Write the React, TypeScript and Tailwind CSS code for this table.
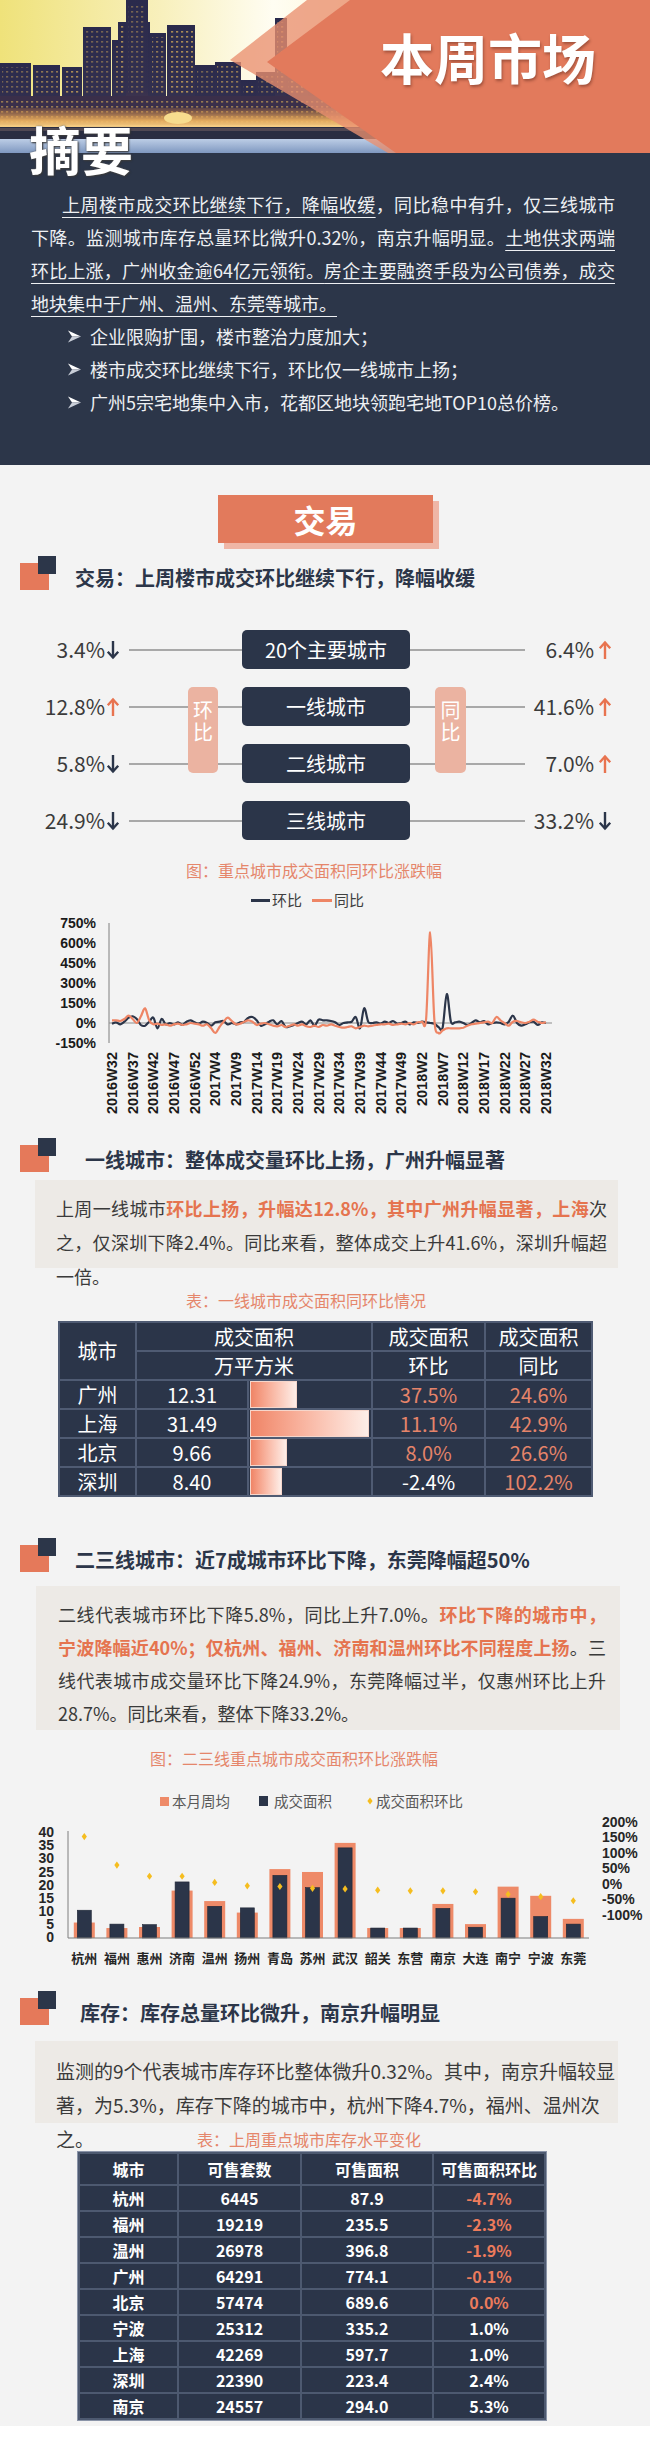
import type { ReactNode } from "react";

const NAVY = "#2b3549";
const ORANGE = "#e8734f";
const ARIAL = "'Liberation Sans', Arial, sans-serif";
const CJK = "'Noto Sans CJK SC', sans-serif";

/** Justified single line; the last line of a paragraph is left as is. */
function Line({ children, last, className = "" }: { children: ReactNode; last?: boolean; className?: string }) {
  return (
    <div className={`${last ? "" : "text-justify [text-align-last:justify]"} ${className}`}>{children}</div>
  );
}

function Hi({ children }: { children: ReactNode }) {
  return <span className="font-bold text-[#e5744f]">{children}</span>;
}

function U({ children }: { children: ReactNode }) {
  return <span className="underline decoration-1 underline-offset-[5px]">{children}</span>;
}

function Heading({ children, pl }: { children: ReactNode; pl: string }) {
  return (
    <div className="relative h-[34px]">
      <div className="absolute left-[20px] top-[7px] w-[29px] h-[27px] bg-[#e5795a]" />
      <div className="absolute left-[38px] top-0 w-[18px] h-[18px] bg-[#2c3649]" />
      <div className={`${pl} pt-[8px] text-[20px] leading-[28px] font-bold text-[#2c3649]`}>{children}</div>
    </div>
  );
}

function Caption({ children, pl }: { children: ReactNode; pl: string }) {
  return <div className={`${pl} text-[16px] leading-[20px] text-[#e5866b]`}>{children}</div>;
}

function Arrow({ up }: { up: boolean }) {
  const c = up ? ORANGE : NAVY;
  return (
    <svg width="14" height="20" viewBox="0 0 14 20" className="shrink-0">
      {up ? (
        <>
          <path d="M7 19V2.5" stroke={c} strokeWidth="2.4" />
          <path d="M1.8 8.2 7 2.5l5.2 5.7" fill="none" stroke={c} strokeWidth="2.4" />
        </>
      ) : (
        <>
          <path d="M7 1v16.5" stroke={c} strokeWidth="2.4" />
          <path d="M1.8 11.8 7 17.5l5.2-5.7" fill="none" stroke={c} strokeWidth="2.4" />
        </>
      )}
    </svg>
  );
}

function Bullet() {
  return (
    <svg width="13" height="13" viewBox="0 0 13 13" className="shrink-0">
      <polygon points="0,0.5 13,6.5 4,6.5" fill="#ffffff" />
      <polygon points="0,12.5 13,6.5 4,6.5" fill="#c9ced8" />
    </svg>
  );
}

function CityArt() {
  const towers: [number, number, number][] = [
    [0, 63, 31], [33, 65, 27], [62, 67, 20], [83, 27, 28], [112, 40, 8], [118, 22, 32],
    [126, 0, 22], [150, 33, 16], [167, 25, 28], [195, 65, 20], [215, 62, 26], [241, 80, 15],
    [256, 72, 28], [275, 18, 12], [286, 62, 22], [308, 88, 40], [350, 70, 30],
  ];
  return (
    <svg width="650" height="153" viewBox="0 0 650 153" className="block">
      <defs>
        <linearGradient id="sky" x1="0" y1="0" x2="1" y2="0">
          <stop offset="0" stopColor="#efe27a" />
          <stop offset="0.25" stopColor="#f8f0bd" />
          <stop offset="0.42" stopColor="#fffdf2" />
          <stop offset="0.7" stopColor="#fbefc0" />
          <stop offset="1" stopColor="#f3d891" />
        </linearGradient>
        <linearGradient id="bld" x1="0" y1="0" x2="0" y2="1">
          <stop offset="0" stopColor="#2a2a4c" />
          <stop offset="0.7" stopColor="#33304f" />
          <stop offset="1" stopColor="#5a3c4a" />
        </linearGradient>
        <linearGradient id="glow" x1="0" y1="0" x2="0" y2="1">
          <stop offset="0" stopColor="#d98840" stopOpacity="0.2" />
          <stop offset="0.6" stopColor="#f0b35e" stopOpacity="0.9" />
          <stop offset="1" stopColor="#f6d28c" />
        </linearGradient>
        <linearGradient id="water" x1="0" y1="0" x2="0" y2="1">
          <stop offset="0" stopColor="#bccde6" />
          <stop offset="1" stopColor="#7f98c0" />
        </linearGradient>
        <pattern id="win" width="5" height="5" patternUnits="userSpaceOnUse">
          <rect x="1" y="1" width="2.2" height="1.6" fill="#f0c15a" opacity="0.85" />
        </pattern>
      </defs>
      <rect width="650" height="153" fill="url(#sky)" />
      {towers.map(([x, y, w], i) => (
        <g key={i}>
          <rect x={x} y={y} width={w} height={125 - y} fill="url(#bld)" />
          <rect x={x + 2} y={y + 4} width={w - 4} height={118 - y} fill="url(#win)" opacity={0.45 + (i % 3) * 0.15} />
        </g>
      ))}
      <rect x="0" y="96" width="420" height="29" fill="#3a2f4a" />
      <rect x="0" y="98" width="420" height="25" fill="url(#win)" opacity="0.6" />
      <rect x="0" y="108" width="420" height="20" fill="url(#glow)" />
      <ellipse cx="178" cy="118" rx="14" ry="6" fill="#f7dc8e" />
      <rect x="0" y="127" width="650" height="12" fill="#2a2d42" />
      <rect x="0" y="128" width="650" height="3" fill="#6a5a60" opacity="0.6" />
      <rect x="0" y="139" width="650" height="14" fill="url(#water)" />
      <polygon points="307,0 650,0 650,153 388,153 230,60" fill="#e9906f" opacity="0.78" />
      <polygon points="350,0 650,0 650,153 396,153 267,62" fill="#e27a5c" />
    </svg>
  );
}

// Weekly series, 2016W32 .. 2018W32
const HUAN = [
  -5, 5, -10, 10, 40, 50, 30, -15, -20, 10, 40, -40, 30, -10, 0, -10, 5, -15, 10, 20, 5, -5, 10, 0, -20, 5,
  10, 15, -10, 0, -10, 5, 10, 40, 45, 20, -20, -10, 10, 20, -10, 15, -30, -25, -15, 0, 10, -10, 20, -20, 25,
  20, 20, 15, 5, -15, 0, 5, 10, 45, -40, 110, 10, 0, 5, -5, 10, 0, 15, -5, 0, 10, -10, 5, 0, 10, 5, 0, -5,
  -30, -35, 217, 10, 5, 10, 0, -15, 0, 20, 5, 15, -10, 0, 5, 0, -10, 10, 55, 0, -20, -10, 5, 10, -15, 5, 0,
];
const TONG = [
  20, 20, 15, 30, 55, 30, 0, 50, 110, 20, -10, -5, -15, -10, -20, -10, -5, -15, -10, 0, -5, -10, -20, -10,
  -40, -75, -30, 10, 40, 15, -10, -5, 10, 20, 10, -15, -5, 0, -10, -20, -25, -15, -30, -20, -10, -20, -10,
  -25, -30, -20, -30, -15, -20, -10, -20, -30, -35, -30, -25, -40, -30, -20, -25, -20, -15, -10, -10, -5,
  -15, -10, -5, -10, 0, -10, 5, 10, 30, 680, 20, -75, -55, -40, -40, -40, -40, -35, -20, -10, -5, 0, 5, 10,
  0, 45, 20, 0, -20, 10, 15, 5, 0, 10, 25, 10, 0, 5,
];
const WEEKS = [
  "2016W32", "2016W37", "2016W42", "2016W47", "2016W52", "2017W4", "2017W9", "2017W14", "2017W19", "2017W24",
  "2017W29", "2017W34", "2017W39", "2017W44", "2017W49", "2018W2", "2018W7", "2018W12", "2018W17", "2018W22",
  "2018W27", "2018W32",
];

function smooth(pts: [number, number][]) {
  let d = `M${pts[0][0].toFixed(1)},${pts[0][1].toFixed(1)}`;
  for (let i = 0; i < pts.length - 1; i++) {
    const p0 = pts[i - 1] ?? pts[i];
    const p1 = pts[i];
    const p2 = pts[i + 1];
    const p3 = pts[i + 2] ?? p2;
    const c1x = p1[0] + (p2[0] - p0[0]) / 6;
    const c1y = p1[1] + (p2[1] - p0[1]) / 6;
    const c2x = p2[0] - (p3[0] - p1[0]) / 6;
    const c2y = p2[1] - (p3[1] - p1[1]) / 6;
    d += ` C${c1x.toFixed(1)},${c1y.toFixed(1)} ${c2x.toFixed(1)},${c2y.toFixed(1)} ${p2[0].toFixed(1)},${p2[1].toFixed(1)}`;
  }
  return d;
}

function LineChart() {
  const px = (i: number) => 112 + i * 4.133;
  const py = (v: number) => 111 - v * 0.1333;
  const toPts = (arr: number[]) => arr.map((v, i) => [px(i), py(v)] as [number, number]);
  return (
    <svg width="650" height="208" viewBox="0 0 650 208" className="block">
      {[750, 600, 450, 300, 150, 0, -150].map((v, k) => (
        <text key={v} x="96" y={11 + k * 20} textAnchor="end" dominantBaseline="central" fontFamily={ARIAL} fontWeight="bold" fontSize="14" fill="#1a1a1a">
          {v}%
        </text>
      ))}
      <line x1="109" y1="11" x2="109" y2="131" stroke="#7f7f7f" strokeWidth="1" />
      <line x1="109" y1="111" x2="552" y2="111" stroke="#8c8c8c" strokeWidth="1.2" />
      <path d={smooth(toPts(HUAN))} fill="none" stroke="#2b3549" strokeWidth="2.2" />
      <path d={smooth(toPts(TONG))} fill="none" stroke="#ee8565" strokeWidth="2.2" />
      {WEEKS.map((w, k) => (
        <text
          key={w}
          transform={`translate(${112 + k * 20.67},140) rotate(-90)`}
          textAnchor="end"
          dominantBaseline="central"
          fontFamily={ARIAL}
          fontWeight="bold"
          fontSize="14.5"
          fill="#1a1a1a"
        >
          {w}
        </text>
      ))}
    </svg>
  );
}

const BARS: [string, number, number, number][] = [
  ["杭州", 5.9, 10.6, 153], ["福州", 3.8, 5.3, 61], ["惠州", 4.2, 5.1, 25], ["济南", 18.1, 21.4, 25],
  ["温州", 14.1, 12.1, 5], ["扬州", 9.7, 11.5, -6], ["青岛", 26.3, 23.9, -8], ["苏州", 25.2, 19.2, -14],
  ["武汉", 36.3, 34.4, -16], ["韶关", 3.8, 3.8, -20], ["东营", 3.8, 3.8, -22], ["南京", 13, 11.3, -22],
  ["大连", 5.3, 4.1, -25], ["南宁", 19.6, 15.2, -33], ["宁波", 16.1, 8.2, -41], ["东莞", 7.3, 5.3, -54],
];

function BarChart() {
  const by = (v: number) => 127 - v * 2.62;
  return (
    <svg width="650" height="163" viewBox="0 0 650 163" className="block">
      {[40, 35, 30, 25, 20, 15, 10, 5, 0].map((v) => (
        <text key={v} x="54" y={by(v) - 1} textAnchor="end" dominantBaseline="central" fontFamily={ARIAL} fontWeight="bold" fontSize="14" fill="#262626">
          {v}
        </text>
      ))}
      {[200, 150, 100, 50, 0, -50, -100].map((v, k) => (
        <text key={v} x="602" y={11 + k * 15.45} dominantBaseline="central" fontFamily={ARIAL} fontWeight="bold" fontSize="14" fill="#262626">
          {v}%
        </text>
      ))}
      <line x1="68" y1="20" x2="68" y2="127" stroke="#7f7f7f" />
      {BARS.map(([name, avg, area, pct], k) => {
        const cx = 68 + 32.6 * (k + 0.5);
        const dy = 73 - pct * 0.31;
        return (
          <g key={name}>
            <rect x={cx - 10.5} y={by(avg)} width="21" height={127 - by(avg)} fill="#ee8a68" />
            <rect x={cx - 7} y={by(area)} width="14" height={127 - by(area)} fill="#2b3549" stroke="#1e2636" strokeWidth="0.6" />
            <path d={`M${cx},${dy - 3.6} L${cx + 2.6},${dy} L${cx},${dy + 3.6} L${cx - 2.6},${dy} Z`} fill="#f5bd1f" />
            <text x={cx} y="146" textAnchor="middle" dominantBaseline="central" fontFamily={CJK} fontWeight="bold" fontSize="13" fill="#262626">
              {name}
            </text>
          </g>
        );
      })}
      <line x1="68" y1="127" x2="589" y2="127" stroke="#7f7f7f" strokeWidth="1.2" />
    </svg>
  );
}

const DIAGRAM = [
  { l: "3.4%", lu: false, name: "20个主要城市", r: "6.4%", ru: true },
  { l: "12.8%", lu: true, name: "一线城市", r: "41.6%", ru: true },
  { l: "5.8%", lu: false, name: "二线城市", r: "7.0%", ru: true },
  { l: "24.9%", lu: false, name: "三线城市", r: "33.2%", ru: false },
];

function Diagram() {
  return (
    <div className="relative flex flex-col gap-[18px]">
      {DIAGRAM.map((row) => (
        <div key={row.name} className="flex items-center h-[39px]">
          <div className="w-[120px] flex justify-end items-center gap-[1px] text-[21px] text-[#3b3b3b]">
            {row.l}
            <Arrow up={row.lu} />
          </div>
          <div className="w-[9px]" />
          <div className="w-[113px] h-[2px] bg-[#a8a8a8]" />
          <div className="w-[168px] h-[39px] rounded-[5px] bg-[#2b3549] flex items-center justify-center text-[20px] text-white">
            {row.name}
          </div>
          <div className="w-[115px] h-[2px] bg-[#a8a8a8]" />
          <div className="w-[87px] flex justify-end items-center gap-[4px] text-[21px] text-[#3b3b3b]">
            {row.r}
            <Arrow up={row.ru} />
          </div>
        </div>
      ))}
      <div className="absolute left-[188px] top-[57px] w-[30px] h-[86px] rounded-[5px] bg-[#ebb3a1] flex flex-col items-center pt-[12px] text-[20px] leading-[22px] text-white">
        <span>环</span>
        <span>比</span>
      </div>
      <div className="absolute left-[435px] top-[57px] w-[31px] h-[86px] rounded-[5px] bg-[#ebb3a1] flex flex-col items-center pt-[12px] text-[20px] leading-[22px] text-white">
        <span>同</span>
        <span>比</span>
      </div>
    </div>
  );
}

const TIER1: [string, number, string, string][] = [
  ["广州", 12.31, "37.5%", "24.6%"],
  ["上海", 31.49, "11.1%", "42.9%"],
  ["北京", 9.66, "8.0%", "26.6%"],
  ["深圳", 8.4, "-2.4%", "102.2%"],
];

function Tier1Table() {
  const td = "border-2 border-[#4f5b73] h-[29px] text-center p-0";
  return (
    <table className="ml-[58px] w-[533px] table-fixed border-collapse bg-[#2b3549] text-white text-[20px] leading-[26px]">
      <colgroup>
        <col className="w-[77px]" />
        <col className="w-[112px]" />
        <col className="w-[124px]" />
        <col className="w-[113px]" />
        <col className="w-[107px]" />
      </colgroup>
      <tbody>
        <tr>
          <td rowSpan={2} className={td}>城市</td>
          <td colSpan={2} className={td}>成交面积</td>
          <td className={td}>成交面积</td>
          <td className={td}>成交面积</td>
        </tr>
        <tr>
          <td colSpan={2} className={td}>万平方米</td>
          <td className={td}>环比</td>
          <td className={td}>同比</td>
        </tr>
        {TIER1.map(([city, v, h, t]) => (
          <tr key={city}>
            <td className={td}>{city}</td>
            <td className={td}>{v.toFixed(2)}</td>
            <td className="border-2 border-[#4f5b73] h-[29px] p-0 pl-[1px]">
              <div
                className="h-[27px] bg-linear-to-r from-[#ef8466] to-[#fdeee8] border border-[#f6d6cb]"
                style={{ width: `${v * 3.78}px` }}
              />
            </td>
            <td className={`${td} ${h.startsWith("-") ? "text-white" : "text-[#e5846a]"}`}>{h}</td>
            <td className={`${td} text-[#e5846a]`}>{t}</td>
          </tr>
        ))}
      </tbody>
    </table>
  );
}

const STOCK: [string, string, string, string][] = [
  ["杭州", "6445", "87.9", "-4.7%"],
  ["福州", "19219", "235.5", "-2.3%"],
  ["温州", "26978", "396.8", "-1.9%"],
  ["广州", "64291", "774.1", "-0.1%"],
  ["北京", "57474", "689.6", "0.0%"],
  ["宁波", "25312", "335.2", "1.0%"],
  ["上海", "42269", "597.7", "1.0%"],
  ["深圳", "22390", "223.4", "2.4%"],
  ["南京", "24557", "294.0", "5.3%"],
];

function StockTable() {
  const td = "border-2 border-[#4d5970] text-center p-0";
  return (
    <table className="ml-[78px] w-[466px] table-fixed border-collapse bg-[#2b3549] text-white text-[16px] font-bold outline outline-1 outline-[#8a94a8]">
      <colgroup>
        <col className="w-[99px]" />
        <col className="w-[123px]" />
        <col className="w-[132px]" />
        <col className="w-[112px]" />
      </colgroup>
      <tbody>
        <tr>
          {["城市", "可售套数", "可售面积", "可售面积环比"].map((h) => (
            <td key={h} className={`${td} h-[32px]`}>{h}</td>
          ))}
        </tr>
        {STOCK.map(([city, n, a, p], i) => (
          <tr key={city}>
            <td className={`${td} h-[25px]`}>{city}</td>
            <td className={`${td} h-[25px]`}>{n}</td>
            <td className={`${td} h-[25px]`}>{a}</td>
            <td className={`${td} h-[25px] ${i < 5 ? "text-[#ec7b5c]" : ""}`}>{p}</td>
          </tr>
        ))}
      </tbody>
    </table>
  );
}

export default function App() {
  return (
    <div className="w-[650px] bg-[#f3f3f3] font-['Noto_Sans_CJK_SC',sans-serif] text-[#3a3a3a] overflow-hidden pb-[6px]">
      {/* banner */}
      <div className="relative z-10 h-[153px]">
        <CityArt />
        <div className="absolute left-[380px] top-[27px] text-[54px] leading-[60px] font-bold text-white [text-shadow:1px_2px_3px_rgba(80,30,20,0.45)]">
          本周市场
        </div>
        <div className="absolute left-[29px] top-[121px] text-[52px] leading-[56px] font-bold text-white [text-shadow:0_0_2px_#555,1px_1px_2px_#333]">
          摘要
        </div>
      </div>

      {/* summary */}
      <div className="bg-[#2c3649] pt-[35px] pb-[46px] text-[#eef0f3] text-[18px] leading-[33px]">
        <div className="ml-[31px] w-[584px]">
          <Line className="pl-[31px]">
            <U>上周楼市成交环比继续下行，降幅收缓</U>，同比稳中有升，仅三线城市
          </Line>
          <Line>
            下降。监测城市库存总量环比微升0.32%，南京升幅明显。<U>土地供求两端</U>
          </Line>
          <Line>
            <U>环比上涨，广州收金逾64亿元领衔。</U>
            <U>房企主要融资手段为公司债券，成交</U>
          </Line>
          <Line last>
            <U>地块集中于广州、温州、东莞等城市。</U>
          </Line>
        </div>
        <div className="pl-[68px] flex flex-col">
          {["企业限购扩围，楼市整治力度加大；", "楼市成交环比继续下行，环比仅一线城市上扬；", "广州5宗宅地集中入市，花都区地块领跑宅地TOP10总价榜。"].map(
            (b) => (
              <div key={b} className="flex items-center gap-[9px]">
                <Bullet />
                <span>{b}</span>
              </div>
            ),
          )}
        </div>
      </div>

      {/* trading */}
      <div className="mt-[30px] ml-[218px] w-[215px] h-[48px] bg-[#e27a5c] shadow-[6px_6px_0_#efb6a6] flex items-center justify-center text-[32px] font-bold text-white">
        交易
      </div>
      <div className="mt-[13px]">
        <Heading pl="pl-[75px]">交易：上周楼市成交环比继续下行，降幅收缓</Heading>
      </div>
      <div className="mt-[40px]">
        <Diagram />
      </div>
      <div className="mt-[20px]">
        <Caption pl="pl-[186px]">图：重点城市成交面积同环比涨跌幅</Caption>
      </div>
      <div className="mt-[10px] h-[20px] flex items-center pl-[251px] text-[15px] text-[#404040]">
        <span className="w-[19px] h-[3px] bg-[#2b3549]" />
        <span className="ml-[2px]">环比</span>
        <span className="ml-[10px] w-[20px] h-[3px] bg-[#ee8565]" />
        <span className="ml-[2px]">同比</span>
      </div>
      <div className="mt-[2px]">
        <LineChart />
      </div>

      {/* tier 1 */}
      <div className="mt-[18px]">
        <Heading pl="pl-[85px]">一线城市：整体成交量环比上扬，广州升幅显著</Heading>
      </div>
      <div className="mt-[8px] ml-[35px] w-[583px] h-[88px] bg-[#edeae6] pt-[11px] pl-[21px] text-[18px] leading-[34px]">
        <div className="w-[551px]">
          <Line>
            上周一线城市<Hi>环比上扬，升幅达12.8%，其中广州升幅显著，上海</Hi>次
          </Line>
          <Line>之，仅深圳下降2.4%。同比来看，整体成交上升41.6%，深圳升幅超</Line>
          <Line last>一倍。</Line>
        </div>
      </div>
      <div className="mt-[22px]">
        <Caption pl="pl-[186px]">表：一线城市成交面积同环比情况</Caption>
      </div>
      <div className="mt-[11px]">
        <Tier1Table />
      </div>

      {/* tier 2/3 */}
      <div className="mt-[41px]">
        <Heading pl="pl-[75px]">二三线城市：近7成城市环比下降，东莞降幅超50%</Heading>
      </div>
      <div className="mt-[14px] ml-[36px] w-[584px] h-[144px] bg-[#edeae6] pt-[12px] pl-[22px] text-[18px] leading-[33px]">
        <div className="w-[548px]">
          <Line>
            二线代表城市环比下降5.8%，同比上升7.0%。<Hi>环比下降的城市中，</Hi>
          </Line>
          <Line>
            <Hi>宁波降幅近40%；仅杭州、福州、济南和温州环比不同程度上扬</Hi>。三
          </Line>
          <Line>线代表城市成交量环比下降24.9%，东莞降幅过半，仅惠州环比上升</Line>
          <Line last>28.7%。同比来看，整体下降33.2%。</Line>
        </div>
      </div>
      <div className="mt-[18px]">
        <Caption pl="pl-[150px]">图：二三线重点城市成交面积环比涨跌幅</Caption>
      </div>
      <div className="mt-[23px] h-[20px] flex items-center text-[14.5px] text-[#595959]">
        <span className="ml-[160px] w-[9px] h-[9px] bg-[#ee8a68]" />
        <span className="ml-[3px]">本月周均</span>
        <span className="ml-[29px] w-[9px] h-[10px] bg-[#2b3549]" />
        <span className="ml-[6px]">成交面积</span>
        <svg width="8" height="8" viewBox="0 0 8 8" className="ml-[34px]">
          <path d="M4 0.5 6.6 4 4 7.5 1.4 4Z" fill="#f5bd1f" />
        </svg>
        <span className="ml-[2px]">成交面积环比</span>
      </div>
      <BarChart />

      {/* stock */}
      <div className="mt-[17px]">
        <Heading pl="pl-[80px]">库存：库存总量环比微升，南京升幅明显</Heading>
      </div>
      <div className="mt-[16px] ml-[35px] w-[583px] h-[82px] bg-[#edeae6] pt-[13px] pl-[21px] text-[19px] leading-[34px] whitespace-nowrap">
        <div className="w-[539px] text-justify [text-align-last:justify]">监测的9个代表城市库存环比整体微升0.32%。其中，南京升幅较显</div>
        <div>著，为5.3%，库存下降的城市中，杭州下降4.7%，福州、温州次</div>
        <div className="flex items-center">
          <span>之。</span>
          <span className="ml-[103px] text-[16px] text-[#e5866b]">表：上周重点城市库存水平变化</span>
        </div>
      </div>
      <div className="mt-[29px]">
        <StockTable />
      </div>
    </div>
  );
}
